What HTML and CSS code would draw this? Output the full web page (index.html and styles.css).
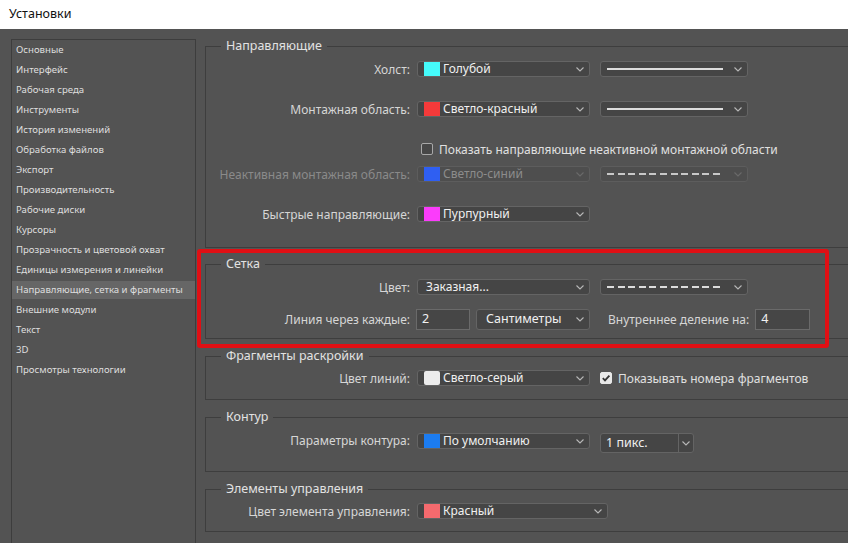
FILE: index.html
```html
<!DOCTYPE html>
<html lang="ru">
<head>
<meta charset="utf-8">
<title>Установки</title>
<link rel="stylesheet" href="styles.css">
</head>
<body>
<div class="app">
  <header class="titlebar">Установки</header>
  <div class="content">
    <nav class="sidebar">
      <div class="item">Основные</div>
      <div class="item">Интерфейс</div>
      <div class="item">Рабочая среда</div>
      <div class="item">Инструменты</div>
      <div class="item">История изменений</div>
      <div class="item">Обработка файлов</div>
      <div class="item">Экспорт</div>
      <div class="item">Производительность</div>
      <div class="item">Рабочие диски</div>
      <div class="item">Курсоры</div>
      <div class="item">Прозрачность и цветовой охват</div>
      <div class="item">Единицы измерения и линейки</div>
      <div class="item active">Направляющие, сетка и фрагменты</div>
      <div class="item">Внешние модули</div>
      <div class="item">Текст</div>
      <div class="item">3D</div>
      <div class="item">Просмотры технологии</div>
    </nav>

    <main class="panel">
      <fieldset class="fs fs-guides">
        <legend>Направляющие</legend>
        <div class="fs-body body-guides">
          <div class="row">
            <span class="lbl">Холст:</span>
            <div class="select"><span class="sw sw-cyan"></span><span class="val">Голубой</span><svg class="chev" width="8" height="5" viewBox="0 0 8 5"><polyline points="0.5,0.5 4,4 7.5,0.5"/></svg></div>
            <div class="select line"><span class="stroke"></span><svg class="chev" width="8" height="5" viewBox="0 0 8 5"><polyline points="0.5,0.5 4,4 7.5,0.5"/></svg></div>
          </div>
          <div class="row gap24">
            <span class="lbl">Монтажная область:</span>
            <div class="select"><span class="sw sw-red"></span><span class="val">Светло-красный</span><svg class="chev" width="8" height="5" viewBox="0 0 8 5"><polyline points="0.5,0.5 4,4 7.5,0.5"/></svg></div>
            <div class="select line"><span class="stroke"></span><svg class="chev" width="8" height="5" viewBox="0 0 8 5"><polyline points="0.5,0.5 4,4 7.5,0.5"/></svg></div>
          </div>
          <div class="row gap24">
            <label class="check indent"><span class="box"></span><span>Показать направляющие неактивной монтажной области</span></label>
          </div>
          <div class="row gap9 disabled">
            <span class="lbl">Неактивная монтажная область:</span>
            <div class="select"><span class="sw sw-blue"></span><span class="val">Светло-синий</span><svg class="chev" width="8" height="5" viewBox="0 0 8 5"><polyline points="0.5,0.5 4,4 7.5,0.5"/></svg></div>
            <div class="select line"><span class="stroke dashed"></span><svg class="chev" width="8" height="5" viewBox="0 0 8 5"><polyline points="0.5,0.5 4,4 7.5,0.5"/></svg></div>
          </div>
          <div class="row gap24">
            <span class="lbl">Быстрые направляющие:</span>
            <div class="select"><span class="sw sw-magenta"></span><span class="val">Пурпурный</span><svg class="chev" width="8" height="5" viewBox="0 0 8 5"><polyline points="0.5,0.5 4,4 7.5,0.5"/></svg></div>
          </div>
        </div>
      </fieldset>

      <fieldset class="fs">
        <legend>Сетка</legend>
        <div class="fs-body body-grid">
          <div class="row">
            <span class="lbl">Цвет:</span>
            <div class="select plain"><span class="val">Заказная...</span><svg class="chev" width="8" height="5" viewBox="0 0 8 5"><polyline points="0.5,0.5 4,4 7.5,0.5"/></svg></div>
            <div class="select line"><span class="stroke dashed"></span><svg class="chev" width="8" height="5" viewBox="0 0 8 5"><polyline points="0.5,0.5 4,4 7.5,0.5"/></svg></div>
          </div>
          <div class="row tall gap13">
            <span class="lbl">Линия через каждые:</span>
            <div class="input first">2</div>
            <div class="select units"><span class="val">Сантиметры</span><svg class="chev" width="8" height="5" viewBox="0 0 8 5"><polyline points="0.5,0.5 4,4 7.5,0.5"/></svg></div>
            <span class="lbl-inline">Внутреннее деление на:</span>
            <div class="input">4</div>
          </div>
        </div>
      </fieldset>

      <fieldset class="fs">
        <legend>Фрагменты раскройки</legend>
        <div class="fs-body body-slices">
          <div class="row">
            <span class="lbl">Цвет линий:</span>
            <div class="select"><span class="sw sw-lightgray"></span><span class="val">Светло-серый</span><svg class="chev" width="8" height="5" viewBox="0 0 8 5"><polyline points="0.5,0.5 4,4 7.5,0.5"/></svg></div>
            <label class="check"><span class="box checked"><svg width="10" height="10" viewBox="0 0 10 10"><polyline points="1.8,5.2 4,7.4 8.4,2.6"/></svg></span><span>Показывать номера фрагментов</span></label>
          </div>
        </div>
      </fieldset>

      <fieldset class="fs">
        <legend>Контур</legend>
        <div class="fs-body body-path">
          <div class="row top">
            <span class="lbl">Параметры контура:</span>
            <div class="select"><span class="sw sw-default"></span><span class="val">По умолчанию</span><svg class="chev" width="8" height="5" viewBox="0 0 8 5"><polyline points="0.5,0.5 4,4 7.5,0.5"/></svg></div>
            <div class="combo"><span class="combo-val">1 пикс.</span><span class="combo-btn"><svg class="chev" width="8" height="5" viewBox="0 0 8 5"><polyline points="0.5,0.5 4,4 7.5,0.5"/></svg></span></div>
          </div>
        </div>
      </fieldset>

      <fieldset class="fs">
        <legend>Элементы управления</legend>
        <div class="fs-body body-controls">
          <div class="row">
            <span class="lbl">Цвет элемента управления:</span>
            <div class="select wide"><span class="sw sw-salmon"></span><span class="val">Красный</span><svg class="chev" width="8" height="5" viewBox="0 0 8 5"><polyline points="0.5,0.5 4,4 7.5,0.5"/></svg></div>
          </div>
        </div>
      </fieldset>
    </main>
  </div>
  <div class="mark"></div>
</div>
</body>
</html>
```
FILE: styles.css
```css
html, body {
  margin: 0;
  padding: 0;
  height: 100%;
  overflow: hidden;
}
body {
  background: #535353;
  font-family: "Noto Sans", "Open Sans", sans-serif;
  color: #d8d8d8;
}
.app {
  position: relative;
  height: 543px;
  display: flex;
  flex-direction: column;
}
.titlebar {
  height: 29px;
  line-height: 28px;
  background: #ffffff;
  color: #111;
  font-size: 12.5px;
  padding-left: 9px;
  flex: none;
}
.content {
  flex: 1;
  display: flex;
  gap: 9px;
  padding-left: 11px;
  min-height: 0;
}
.sidebar {
  width: 185px;
  box-sizing: border-box;
  margin-top: 10px;
  padding-top: 1px;
  border: 1px solid #3d3d3d;
  border-bottom: none;
  flex: none;
}
.item {
  height: 18px;
  line-height: 18px;
  margin-bottom: 2px;
  padding-left: 4px;
  font-size: 9.6px;
  color: #dedede;
  white-space: nowrap;
}
.item.active {
  background: #666666;
}
.panel {
  padding-top: 9px;
  flex: none;
  width: 720px;
}
.fs {
  margin: 0 0 9px 0;
  padding: 0;
  border: 1px solid #3e3e3e;
  min-inline-size: 0;
}
.fs-guides {
  margin-bottom: 8px;
}
.fs legend {
  margin-left: 15px;
  padding: 0 5px;
  font-size: 12.5px;
  line-height: 16px;
  color: #e2e2e2;
}
.body-guides { padding: 7px 0 25px; }
.body-grid { padding: 7px 0 8px; }
.body-slices { padding: 6px 0 13px; }
.body-path { padding: 8px 0 18px; }
.body-controls { padding: 6px 0 12px; }

.row {
  display: flex;
  align-items: center;
  height: 16px;
  font-size: 12px;
}
.row.tall { height: 22px; }
.row.top { align-items: flex-start; height: 20px; }
.gap24 { margin-top: 24px; }
.gap13 { margin-top: 13px; }
.gap9 { margin-top: 9px; }

.lbl {
  width: 211px;
  box-sizing: border-box;
  padding-right: 7px;
  text-align: right;
  white-space: nowrap;
  color: #d6d6d6;
  flex: none;
}
.row.top .lbl { line-height: 16px; }

.select {
  display: flex;
  align-items: center;
  box-sizing: border-box;
  height: 16px;
  width: 173px;
  border: 1px solid #646464;
  border-radius: 3px;
  background: #454545;
  padding: 0 5px 0 6px;
  color: #f0f0f0;
  flex: none;
}
.select + .select,
.select + .combo,
.select + .check {
  margin-left: 10px;
}
.select.plain { padding-left: 8px; }
.select.wide { width: 191px; }
.select.units {
  width: 114px;
  height: 21px;
  padding-left: 9px;
  margin-left: 6px;
  font-size: 12.5px;
}
.select.line { width: 148px; }
.val {
  flex: 1;
  line-height: 14px;
  white-space: nowrap;
}
.chev {
  flex: none;
  margin-left: auto;
  fill: none;
  stroke: #b8b8b8;
  stroke-width: 1.1;
}
.sw {
  width: 16px;
  height: 14px;
  margin-right: 3px;
  flex: none;
}
.sw-cyan { background: #45fbfb; }
.sw-red { background: #f53a3a; }
.sw-blue { background: #2f5ff2; }
.sw-magenta { background: #fb3cfb; }
.sw-lightgray { background: #ececec; border-radius: 2px; }
.sw-default { background: #1c7cf0; }
.sw-salmon { background: #f56a6e; }

.stroke {
  width: 116px;
  height: 2px;
  background: #dcdcdc;
  flex: none;
}
.stroke.dashed {
  background: repeating-linear-gradient(90deg, #dcdcdc 0 7px, transparent 7px 10.6px);
}

.disabled .lbl { color: #8a8a8a; }
.disabled .select {
  background: #4e4e4e;
  border-color: #5d5d5d;
  color: #8c8c8c;
}
.disabled .chev { stroke: #6a6a6a; }
.disabled .stroke.dashed {
  background: repeating-linear-gradient(90deg, #c8c8c8 0 7px, transparent 7px 10.6px);
}

.check {
  display: flex;
  align-items: center;
  gap: 6px;
  font-size: 12px;
  color: #e0e0e0;
  white-space: nowrap;
}
.check.indent { margin-left: 215px; }
.box {
  width: 12px;
  height: 12px;
  box-sizing: border-box;
  border: 1px solid #a8a8a8;
  border-radius: 2px;
  background: #474747;
  display: flex;
  align-items: center;
  justify-content: center;
  flex: none;
}
.box.checked {
  background: #e8e8e8;
  border-color: #e8e8e8;
}
.box svg {
  fill: none;
  stroke: #333;
  stroke-width: 1.8;
}

.input {
  box-sizing: border-box;
  width: 55px;
  height: 21px;
  border: 1px solid #6a6a6a;
  background: #464646;
  color: #f2f2f2;
  padding-left: 5px;
  line-height: 18px;
  font-size: 12.5px;
  flex: none;
}
.input.first { margin-left: -1px; width: 54px; }
.lbl-inline {
  margin-left: 18px;
  margin-right: 6px;
  white-space: nowrap;
  color: #d6d6d6;
  font-size: 12px;
}

.combo {
  display: flex;
  box-sizing: border-box;
  width: 94px;
  height: 20px;
  border: 1px solid #646464;
  border-radius: 3px;
  background: #454545;
  color: #f0f0f0;
  font-size: 12.5px;
}
.combo-val {
  flex: 1;
  padding-left: 5px;
  line-height: 18px;
}
.combo-btn {
  width: 14px;
  border-left: 1px solid #646464;
  display: flex;
  align-items: center;
  justify-content: center;
}
.combo-btn .chev { margin: 0; }

.mark {
  position: absolute;
  left: 197px;
  top: 249px;
  width: 632px;
  height: 99px;
  box-sizing: border-box;
  border: 4px solid #e00f14;
  border-radius: 3px;
  pointer-events: none;
}
```
